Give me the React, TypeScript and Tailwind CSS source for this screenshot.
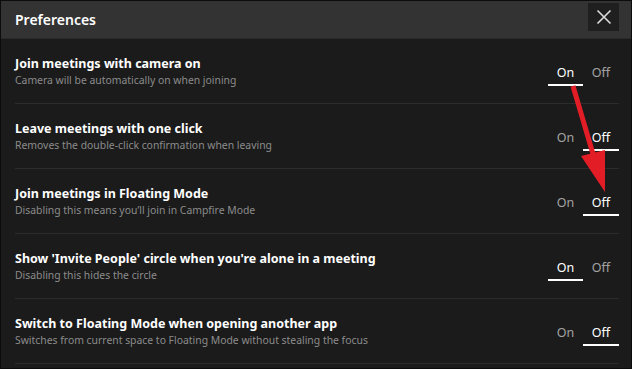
import React from "react";

// ---------------------------------------------------------------------------
// Data
// ---------------------------------------------------------------------------

const ROWS = [
  { title: "Join meetings with camera on", desc: "Camera will be automatically on when joining", on: true },
  { title: "Leave meetings with one click", desc: "Removes the double-click confirmation when leaving", on: false },
  { title: "Join meetings in Floating Mode", desc: "Disabling this means you\u2019ll join in Campfire Mode", on: false },
  { title: "Show 'Invite People' circle when you're alone in a meeting", desc: "Disabling this hides the circle", on: true },
  { title: "Switch to Floating Mode when opening another app", desc: "Switches from current space to Floating Mode without stealing the focus", on: false },
];

function Toggle({ on }: { on: boolean }) {
  return (
    <div className="flex text-[12.5px] leading-none mt-[11px]">
      <span
        className={
          "w-[35px] pb-[5px] text-center border-b-2 " +
          (on ? "text-white border-white" : "text-[#a3a3a3] border-transparent")
        }
      >
        On
      </span>
      <span
        className={
          "w-[36px] pb-[5px] text-center border-b-2 " +
          (!on ? "text-white border-white" : "text-[#a3a3a3] border-transparent")
        }
      >
        Off
      </span>
    </div>
  );
}

export default function App() {
  return (
    <div
      className="relative w-[632px] h-[369px] overflow-hidden bg-[#1b1b1b] border border-[#0c0c0c]"
      style={{ fontFamily: '"Noto Sans", "Open Sans", sans-serif' }}
    >
      {/* Header */}
      <header className="flex items-center justify-between h-[38px] bg-[#333333] pl-[14px] pr-[12px] border-b border-[#2a2a2a]">
        <h1 className="text-[14px] font-semibold text-white">Preferences</h1>
        <button className="flex h-[28px] w-[31px] -mt-[5px] items-center justify-center bg-[#1f1f1f]">
          <svg width="16" height="16" viewBox="0 0 16 16" fill="none" stroke="#dcdcdc" strokeWidth="1.6">
            <path d="M1.5 1.5 L14.5 14.5 M14.5 1.5 L1.5 14.5" />
          </svg>
        </button>
      </header>

      {/* Rows */}
      <div className="pl-[14px] pr-[12px]">
        {ROWS.map((row) => (
          <div key={row.title} className="flex h-[65px] items-center justify-between border-b border-[#2c2c2c]">
            <div className="flex flex-col">
              <span className="text-[12.5px] font-bold leading-[18px] text-white">{row.title}</span>
              <span className="text-[10.4px] leading-[14px] text-[#8c8c8c]">{row.desc}</span>
            </div>
            <Toggle on={row.on} />
          </div>
        ))}
      </div>

      {/* Red annotation arrow */}
      <svg className="absolute left-0 top-0 pointer-events-none" width="632" height="369">
        <path d="M572 85 L592 153" stroke="#e21d25" strokeWidth="5" strokeLinecap="butt" />
        <path d="M580 155 L604 149 L604 191 Z" fill="#e21d25" />
      </svg>
    </div>
  );
}
